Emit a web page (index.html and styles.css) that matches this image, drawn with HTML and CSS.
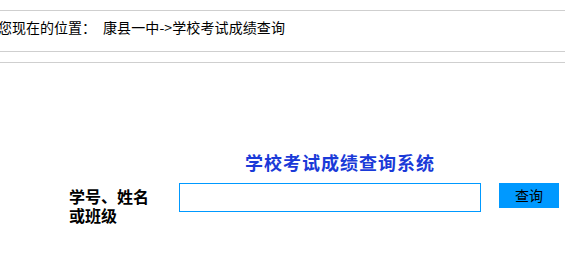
FILE: index.html
```html
<!DOCTYPE html>
<html lang="zh-CN">
<head>
<meta charset="utf-8">
<title>学校考试成绩查询系统</title>
<link rel="stylesheet" href="styles.css">
</head>
<body>
<div class="crumb">您现在的位置：<span class="path">康县一中-&gt;学校考试成绩查询</span></div>
<div class="sep"></div>
<div class="title">学校考试成绩查询系统</div>
<form class="form" onsubmit="return false">
  <label class="label" for="q">学号、姓名或班级</label>
  <input class="input" id="q" type="text">
  <button class="btn" type="button">查询</button>
</form>
</body>
</html>
```
FILE: styles.css
```css
html, body {
  margin: 0;
  padding: 0;
  background: #fff;
  font-family: "Noto Sans CJK SC", "Noto Sans", sans-serif;
  color: #000;
}
.crumb {
  margin-top: 10px;
  border-top: 1px solid #cfcfcf;
  border-bottom: 1px solid #cfcfcf;
  height: 32px;
  padding-bottom: 8px;
  line-height: 32px;
  font-size: 14px;
  text-indent: -2px;
  white-space: nowrap;
}
.path {
  margin-left: 7px;
  letter-spacing: 0.1px;
}
.sep {
  margin-top: 10px;
  border-top: 1px solid #cfcfcf;
}
.title {
  margin-top: 90px;
  padding-left: 245px;
  font-size: 18px;
  line-height: 18px;
  font-weight: bold;
  letter-spacing: 1px;
  color: #1a3ad8;
  white-space: nowrap;
}
.form {
  display: flex;
  align-items: flex-start;
  margin: 12px 0 0 69px;
}
.label {
  width: 88px;
  margin-right: 22px;
  margin-top: 4px;
  font-size: 16px;
  line-height: 19px;
  font-weight: bold;
}
.input {
  box-sizing: border-box;
  width: 302px;
  height: 29px;
  margin: 0;
  padding: 0 4px;
  border: 1px solid #0099ff;
  outline: none;
  font-size: 14px;
  font-family: inherit;
}
.btn {
  box-sizing: border-box;
  width: 60px;
  height: 25px;
  margin: 0 0 0 18px;
  padding: 0;
  border: none;
  background: #0099ff;
  color: #000;
  font-size: 14px;
  line-height: 25px;
  font-family: inherit;
}
```
